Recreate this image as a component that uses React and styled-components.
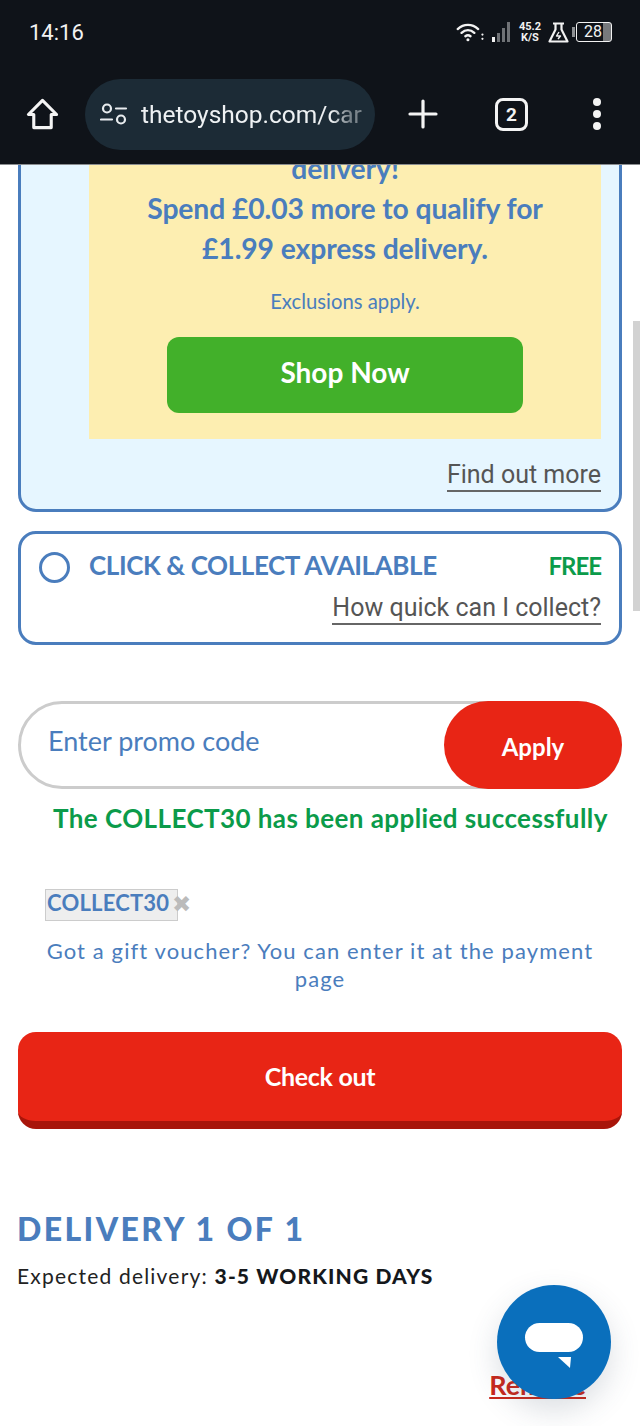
import React from 'react'
import styled, { createGlobalStyle } from 'styled-components'

const GlobalStyle = createGlobalStyle`
    html, body {
        margin: 0;
        padding: 0;
        background: #fff;
    }
    * {
        box-sizing: border-box;
    }
`

const BRAND = `Lato, "Open Sans", sans-serif`
const SYSTEM = `Roboto, "Noto Sans", sans-serif`
const BLUE = '#4a7dbd'
const RED = '#e82515'
const GREEN = '#0b9b4a'

function App() {
    return (
        <Screen>
            <GlobalStyle />
            <Header>
                <StatusBar>
                    <Clock>14:16</Clock>
                    <StatusIcons>
                        <svg width="29" height="22" viewBox="0 0 34 24" fill="none" stroke="#f2f2f2" strokeWidth="2.800" strokeLinecap="round">
                            <path d="M2 8.500c7-6.500 17-6.500 24 0" />
                            <path d="M6.500 13c4.500-4 10.500-4 15 0" />
                            <path d="M11 17c2-1.700 4-1.700 6 0" />
                            <circle cx="14" cy="21" r="1.800" fill="#f2f2f2" stroke="none" />
                            <circle cx="31" cy="15" r="1.300" fill="#f2f2f2" stroke="none" />
                            <circle cx="31" cy="20" r="1.300" fill="#f2f2f2" stroke="none" />
                        </svg>
                        <svg width="20" height="22" viewBox="0 0 20 22">
                            <rect x="0" y="16" width="3" height="5" fill="#f2f2f2" />
                            <rect x="5" y="12" width="3" height="9" fill="#6f7276" />
                            <rect x="10" y="7" width="3" height="14" fill="#6f7276" />
                            <rect x="15" y="1" width="3" height="20" fill="#6f7276" />
                        </svg>
                        <Speed>45.2<br />K/S</Speed>
                        <svg width="21" height="21" viewBox="0 0 21 21" fill="none" stroke="#f2f2f2" strokeWidth="2.200" strokeLinejoin="round">
                            <path d="M5 1.500h11M7.500 1.500v6L1.500 19.500h18L13.500 7.500v-6" />
                            <path d="M11 10l-2.500 4h4L10 17" strokeWidth="1.400" />
                        </svg>
                        <Battery>
                            <BatteryCap />
                            <BatteryBody>
                                <BatteryLevel>28</BatteryLevel>
                            </BatteryBody>
                        </Battery>
                    </StatusIcons>
                </StatusBar>
                <BrowserBar>
                    <svg width="33" height="34" viewBox="0 0 34 34" fill="none" stroke="#f4f4f4" strokeWidth="3.200" strokeLinejoin="round">
                        <path d="M17 3L2.500 17.500H8V31h18V17.500h5.500z" />
                    </svg>
                    <AddressPill>
                        <svg width="28" height="24" viewBox="0 0 28 24" fill="none" stroke="#e8ecef" strokeWidth="2.200" strokeLinecap="round">
                            <circle cx="7" cy="6.500" r="4" />
                            <path d="M16 6.500h10M1 17.500h11" />
                            <circle cx="21" cy="17.500" r="4" />
                        </svg>
                        <AddressText>thetoyshop.com/car</AddressText>
                    </AddressPill>
                    <BarActions>
                        <svg width="30" height="30" viewBox="0 0 30 30" stroke="#f4f4f4" strokeWidth="3.200" strokeLinecap="round">
                            <path d="M15 2v26M2 15h26" />
                        </svg>
                        <TabCount>2</TabCount>
                        <MenuDots>
                            <Dot />
                            <Dot />
                            <Dot />
                        </MenuDots>
                    </BarActions>
                </BrowserBar>
            </Header>

            <Viewport>
                <Content>
                    <DeliveryCard>
                        <PromoBox>
                            <PromoLine>delivery!</PromoLine>
                            <PromoLine>Spend £0.03 more to qualify for</PromoLine>
                            <PromoLine>£1.99 express delivery.</PromoLine>
                            <Exclusions>Exclusions apply.</Exclusions>
                            <ShopButton>Shop Now</ShopButton>
                        </PromoBox>
                        <InfoRow>
                            <InfoLink>Find out more</InfoLink>
                        </InfoRow>
                    </DeliveryCard>

                    <CollectCard>
                        <CollectRow>
                            <Radio />
                            <CollectTitle>CLICK &amp; COLLECT AVAILABLE</CollectTitle>
                            <Free>FREE</Free>
                        </CollectRow>
                        <InfoRow $gap={11}>
                            <InfoLink>How quick can I collect?</InfoLink>
                        </InfoRow>
                    </CollectCard>

                    <PromoForm>
                        <PromoInput placeholder="Enter promo code" />
                        <ApplyButton>Apply</ApplyButton>
                    </PromoForm>
                    <SuccessText>The COLLECT30 has been applied successfully</SuccessText>

                    <AppliedRow>
                        <Chip>COLLECT30</Chip>
                        <ChipRemove>✖</ChipRemove>
                    </AppliedRow>
                    <GiftNote>Got a gift voucher? You can enter it at the payment page</GiftNote>

                    <CheckoutButton>Check out</CheckoutButton>

                    <DeliveryHeading>DELIVERY 1 OF 1</DeliveryHeading>
                    <Expected>Expected delivery: <strong>3-5 WORKING DAYS</strong></Expected>
                    <RemoveRow>
                        <RemoveLink>Remove</RemoveLink>
                    </RemoveRow>
                </Content>
                <Scrollbar />
            </Viewport>

            <ChatButton>
                <svg width="60" height="60" viewBox="0 0 60 60" fill="#fff">
                    <rect x="1" y="1" width="58" height="29" rx="14.500" />
                    <path d="M34 35l13 0-1 11z" />
                </svg>
            </ChatButton>
        </Screen>
    )
}

const Screen = styled.div`
    position: relative;
    width: 640px;
    height: 1426px;
    overflow: hidden;
    background: #fff;
`

const Header = styled.header`
    position: relative;
    z-index: 2;
    height: 165px;
    background: #0f1319;
    border-bottom: 1px solid #8a8d90;
    font-family: ${SYSTEM};
    color: #f2f2f2;
`

const StatusBar = styled.div`
    display: flex;
    align-items: center;
    justify-content: space-between;
    height: 64px;
    padding: 0 29px;
`

const Clock = styled.span`
    font-size: 22px;
`

const StatusIcons = styled.div`
    display: flex;
    align-items: center;
    gap: 7px;
`

const Speed = styled.span`
    font-size: 11px;
    font-weight: 700;
    line-height: 11px;
    text-align: center;
`

const Battery = styled.div`
    display: flex;
    align-items: center;
    margin: 0 -1px 0 -4px;
`

const BatteryCap = styled.span`
    width: 3px;
    height: 10px;
    margin-right: 1px;
    background: #8d9093;
`

const BatteryBody = styled.span`
    display: block;
    width: 36px;
    height: 20px;
    border: 1.500px solid #f2f2f2;
    border-radius: 3px;
    background: linear-gradient(90deg, #0f1319 76%, #77797c 76%);
`

const BatteryLevel = styled.span`
    display: block;
    padding-left: 7px;
    font-size: 16px;
    line-height: 17px;
`

const BrowserBar = styled.div`
    display: flex;
    align-items: center;
    height: 100px;
    padding: 0 0 0 26px;
`

const AddressPill = styled.div`
    display: flex;
    align-items: center;
    gap: 13px;
    width: 290px;
    height: 71px;
    margin: 0 0 0 26px;
    padding: 0 8px 0 15px;
    border-radius: 36px;
    background: #1c2b36;
`

const AddressText = styled.span`
    flex: 1;
    font-size: 24.500px;
    white-space: nowrap;
    color: #eef1f3;
    -webkit-mask-image: linear-gradient(90deg, #000 84%, rgba(0, 0, 0, 0.45) 92%);
    mask-image: linear-gradient(90deg, #000 84%, rgba(0, 0, 0, 0.45) 92%);
`

const BarActions = styled.div`
    display: flex;
    align-items: center;
    margin-left: 33px;
    gap: 58px;
`

const TabCount = styled.span`
    display: flex;
    align-items: center;
    justify-content: center;
    width: 33px;
    height: 33px;
    margin-left: -1px;
    border: 3px solid #f4f4f4;
    border-radius: 8px;
    font-size: 19px;
    font-weight: 700;
`

const MenuDots = styled.div`
    display: flex;
    flex-direction: column;
    gap: 4px;
    margin-left: 7px;
`

const Dot = styled.span`
    width: 8px;
    height: 8px;
    border-radius: 50%;
    background: #f4f4f4;
`

const Viewport = styled.main`
    position: relative;
    height: 1261px;
    overflow: hidden;
`

// the page is scrolled, the top of the first card sits under the browser bar
const Content = styled.div`
    margin-top: -45px;
    padding: 0 18px;
    font-family: ${BRAND};
`

const Card = styled.section`
    border: 3px solid ${BLUE};
    border-radius: 18px;
    padding: 0 18px 17px;
`

const DeliveryCard = styled(Card)`
    background: #e6f6ff;
`

const CollectCard = styled(Card)`
    margin-top: 19px;
    padding: 14px 18px 17px 18px;
`

const PromoBox = styled.div`
    margin: 17px 0 0 50px;
    padding: 8px 0 26px;
    background: #fdeeb1;
    text-align: center;
`

const PromoLine = styled.div`
    font-size: 28.300px;
    font-weight: 700;
    line-height: 40px;
    letter-spacing: -0.1px;
    color: ${BLUE};
`

const Exclusions = styled.div`
    margin-top: 18px;
    font-size: 20.300px;
    line-height: 30px;
    color: ${BLUE};
`

const ShopButton = styled.button`
    display: block;
    width: 356px;
    height: 76px;
    margin: 21px auto 0;
    padding: 0 0 7px;
    border: 0;
    border-radius: 12px;
    background: #42b02a;
    color: #fff;
    font-family: ${BRAND};
    font-size: 28px;
    font-weight: 700;
`

const InfoRow = styled.div`
    display: flex;
    justify-content: flex-end;
    margin-top: ${props => props.$gap ?? 21}px;
`

const InfoLink = styled.a`
    border-bottom: 2px solid #666;
    color: #555;
    font-family: ${SYSTEM};
    font-size: 25px;
    line-height: 30px;
`

const CollectRow = styled.div`
    display: flex;
    align-items: center;
    height: 34px;
`

const Radio = styled.span`
    flex: none;
    width: 31px;
    height: 31px;
    margin: 4px 19px 0 0;
    border: 3px solid ${BLUE};
    border-radius: 50%;
`

const CollectTitle = styled.span`
    flex: 1;
    font-size: 26px;
    font-weight: 700;
    letter-spacing: -0.4px;
    color: ${BLUE};
`

const Free = styled.span`
    font-size: 24px;
    font-weight: 700;
    letter-spacing: -1px;
    color: ${GREEN};
`

const PromoForm = styled.form`
    display: flex;
    height: 88px;
    margin-top: 56px;
    border: 3px solid #ccc;
    border-radius: 44px;
`

const PromoInput = styled.input`
    flex: 1;
    min-width: 0;
    height: 73px;
    padding: 0 0 0 27px;
    border: 0;
    outline: 0;
    background: transparent;
    font-family: ${BRAND};
    font-size: 27px;
    color: ${BLUE};
    &::placeholder {
        color: ${BLUE};
        opacity: 1;
    }
`

const ApplyButton = styled.button`
    flex: none;
    width: 178px;
    height: 88px;
    margin: -3px -3px -3px 0;
    padding: 2px 0 0;
    border: 0;
    border-radius: 44px;
    background: ${RED};
    color: #fff;
    font-family: ${BRAND};
    font-size: 24px;
    font-weight: 700;
`

const SuccessText = styled.p`
    margin: 13px 0 0;
    padding-left: 35px;
    font-size: 26px;
    font-weight: 700;
    line-height: 32px;
    letter-spacing: 0.42px;
    white-space: nowrap;
    color: ${GREEN};
`

const AppliedRow = styled.div`
    display: flex;
    align-items: center;
    margin: 55px 0 0 27px;
`

const Chip = styled.span`
    width: 133px;
    height: 32px;
    padding-left: 1px;
    border: 1px solid #ccc;
    background: #eee;
    font-size: 22px;
    font-weight: 700;
    line-height: 26px;
    letter-spacing: 0.2px;
    color: ${BLUE};
`

const ChipRemove = styled.span`
    margin: -2px 0 0 -6px;
    font-family: "DejaVu Sans", sans-serif;
    font-size: 23px;
    line-height: 28px;
    color: #bbb;
`

const GiftNote = styled.p`
    margin: 16px auto 0;
    width: 570px;
    font-size: 22px;
    line-height: 28px;
    letter-spacing: 1.100px;
    text-align: center;
    color: ${BLUE};
`

const CheckoutButton = styled.button`
    display: block;
    width: 100%;
    height: 97px;
    margin-top: 39px;
    padding: 0 0 2px;
    border: 0;
    border-bottom: 8px solid #a8150a;
    border-radius: 18px;
    background: ${RED};
    color: #fff;
    font-family: ${BRAND};
    font-size: 25px;
    font-weight: 700;
    letter-spacing: -0.3px;
`

const DeliveryHeading = styled.h2`
    margin: 80px 0 0 -1px;
    font-size: 32px;
    font-weight: 900;
    line-height: 40px;
    letter-spacing: 2.400px;
    color: ${BLUE};
`

const Expected = styled.p`
    margin: 13px 0 0 -1px;
    font-size: 21px;
    line-height: 28px;
    letter-spacing: 1.200px;
    color: #222;
    strong {
        font-weight: 900;
        letter-spacing: 1.150px;
        color: #15181c;
    }
`

const RemoveRow = styled.div`
    display: flex;
    justify-content: flex-end;
    margin: 83px 36px 0 0;
`

const RemoveLink = styled.a`
    font-size: 27px;
    font-weight: 700;
    line-height: 24px;
    text-decoration: underline;
    color: #c9281b;
`

const Scrollbar = styled.div`
    position: absolute;
    top: 156px;
    right: 0;
    width: 7px;
    height: 290px;
    background: #d2d2d2;
`

const ChatButton = styled.div`
    position: absolute;
    z-index: 3;
    left: 497px;
    top: 1285px;
    display: flex;
    align-items: center;
    justify-content: center;
    width: 114px;
    height: 114px;
    padding: 20px 0 0;
    border-radius: 50%;
    background: #0a6fbc;
    box-shadow: 0 12px 30px rgba(60, 80, 100, 0.18);
`

export default App
